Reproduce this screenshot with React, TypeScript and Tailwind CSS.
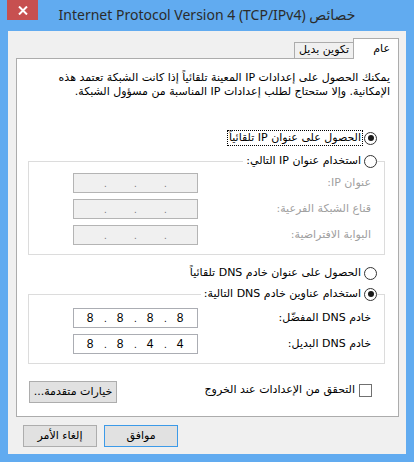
import React from 'react';

const arabic = "font-['DejaVu_Sans',sans-serif]";

const Radio: React.FC<{ checked?: boolean }> = ({ checked }) => (
  <span className="w-[13px] h-[13px] rounded-full border border-[#333333] bg-white flex items-center justify-center shrink-0">
    {checked && <span className="w-[6px] h-[6px] rounded-full bg-[#1a1a1a]" />}
  </span>
);

const IpBox: React.FC<{ parts?: string[]; disabled?: boolean }> = ({ parts, disabled }) => (
  <div
    dir="ltr"
    className={`w-[125px] h-[20px] border flex items-center font-['Liberation_Sans',sans-serif] text-[12px] text-black ${
      disabled ? 'bg-[#f0f0f0] border-[#b4b4b4]' : 'bg-white border-[#abadb3]'
    }`}
  >
    {[0, 1, 2, 3].map((i) => (
      <React.Fragment key={i}>
        <span className="w-[30px] text-center leading-[18px] pl-[2px]">{parts ? parts[i] : ''}</span>
        {i < 3 && <span className={`w-[0px] text-center text-[10px] ${disabled ? 'text-[#7a7a7a]' : 'text-black'}`}>.</span>}
      </React.Fragment>
    ))}
  </div>
);

const FieldRow: React.FC<{ label: string; parts?: string[]; disabled?: boolean; top: string }> = ({
  label,
  parts,
  disabled,
  top,
}) => (
  <div className={`flex items-center justify-between h-[20px] pr-[13px] pl-[44px] ${top}`}>
    <span className={`text-[11px] ${disabled ? 'text-[#a0a0a0]' : 'text-black'}`}>{label}</span>
    <IpBox parts={parts} disabled={disabled} />
  </div>
);

const Button: React.FC<{ children: React.ReactNode; primary?: boolean; className?: string }> = ({
  children,
  primary,
  className,
}) => (
  <button
    className={`h-[22px] bg-[#e1e1e1] border text-[11px] text-black flex items-center justify-center ${
      primary ? 'border-[#3c9ae8]' : 'border-[#adadad]'
    } ${className ?? ''}`}
  >
    {children}
  </button>
);

export default function App() {
  return (
    <div className="w-[414px] h-[462px] bg-[#61abf0] relative overflow-hidden">
      <div className="absolute left-[7px] top-0 w-[31px] h-[20px] bg-[#c75050] flex items-center justify-center">
        <svg width="10" height="9" viewBox="0 0 10 9">
          <path d="M1 0.5 L9 8.5 M9 0.5 L1 8.5" stroke="#ffffff" strokeWidth="2" />
        </svg>
      </div>
      <div
        dir="ltr"
        className="h-[31px] flex items-center justify-center pb-[2px] font-['Noto_Sans','DejaVu_Sans',sans-serif] text-[14px] text-[#2b2b2b]"
      >
        Internet Protocol Version 4 (TCP/IPv4) خصائص
      </div>

      <div dir="rtl" className={`ml-[8px] w-[398px] h-[423px] bg-[#f0f0f0] pt-[7px] pr-[7px] pl-[8px] ${arabic}`}>
        <div className="flex items-end h-[20px]">
          <div className="w-[46px] h-[21px] bg-white border border-b-0 border-[#acacac] -mb-px relative z-10 text-[11px] text-black pr-[8px] pt-[2px]">
            عام
          </div>
          <div className="w-[59px] h-[16px] bg-[#f0f0f0] border-t border-l border-[#acacac] text-[11px] text-black flex items-center justify-center">
            تكوين بديل
          </div>
        </div>

        <div className="h-[359px] bg-white border border-[#acacac]">
          <p className="mt-[12px] pr-[8px] text-[11px] leading-[14px] text-black whitespace-nowrap">
            يمكنك الحصول على إعدادات IP المعينة تلقائياً إذا كانت الشبكة تعتمد هذه
            <br />
            الإمكانية. وإلا ستحتاج لطلب إعدادات IP المناسبة من مسؤول الشبكة.
          </p>

          <div className="mt-[31px] h-[16px] flex items-center pr-[21px] gap-[1px]">
            <Radio checked />
            <span className="border border-dotted border-black text-[11px] leading-[14px] text-black px-[1px]">
              الحصول على عنوان IP تلقائياً
            </span>
          </div>

          <div className="mt-[15px] mr-[13px] ml-[11px] h-[94px] border border-[#dcdcdc]">
            <div className="-mt-[9px] h-[16px] flex pr-[7px]">
              <span className="bg-white flex items-center gap-[3px] pl-[3px]">
                <Radio />
                <span className="text-[11px] text-black">استخدام عنوان IP التالي:</span>
              </span>
            </div>
            <FieldRow label="عنوان IP:" disabled top="mt-[4px]" />
            <FieldRow label="قناع الشبكة الفرعية:" disabled top="mt-[6px]" />
            <FieldRow label="البوابة الافتراضية:" disabled top="mt-[6px]" />
          </div>

          <div className="mt-[10px] h-[16px] flex items-center pr-[21px] gap-[3px]">
            <Radio />
            <span className="text-[11px] text-black">الحصول على عنوان خادم DNS تلقائياً</span>
          </div>

          <div className="mt-[13px] mr-[13px] ml-[11px] h-[70px] border border-[#dcdcdc]">
            <div className="-mt-[9px] h-[16px] flex pr-[7px]">
              <span className="bg-white flex items-center gap-[3px] pl-[3px]">
                <Radio checked />
                <span className="text-[11px] text-black">استخدام عناوين خادم DNS التالية:</span>
              </span>
            </div>
            <FieldRow label="خادم DNS المفضّل:" parts={['8', '8', '8', '8']} top="mt-[6px]" />
            <FieldRow label="خادم DNS البديل:" parts={['8', '8', '4', '4']} top="mt-[6px]" />
          </div>

          <div className="mt-[17px] flex justify-between items-start pr-[26px] pl-[12px]">
            <div className="flex items-center gap-[4px] mt-[1px]">
              <span className="w-[13px] h-[13px] border border-[#707070] bg-white shrink-0" />
              <span className="text-[11px] text-black">التحقق من الإعدادات عند الخروج</span>
            </div>
            <Button className="w-[88px]">خيارات متقدمة...</Button>
          </div>
        </div>

        <div className="mt-[8px] flex justify-end gap-[7px] pl-[7px]">
          <Button primary className="w-[74px]">
            موافق
          </Button>
          <Button className="w-[74px]">إلغاء الأمر</Button>
        </div>
      </div>
    </div>
  );
}
